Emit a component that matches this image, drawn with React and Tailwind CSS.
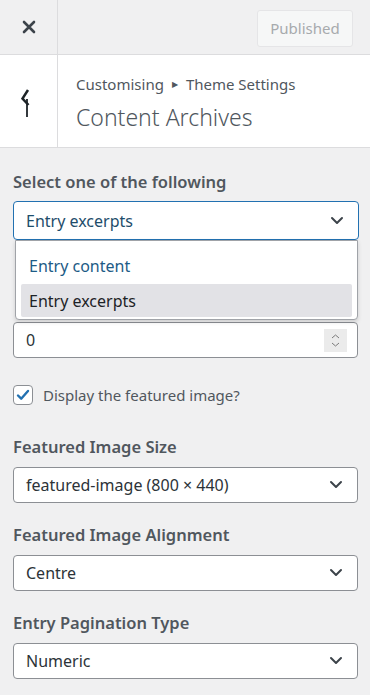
import React from 'react';

const font = { fontFamily: '"Noto Sans", "Open Sans", sans-serif' };

const Chevron = () => (
    <svg width="14" height="9" viewBox="0 0 14 9" fill="none">
        <path d="M2 2l5 5 5-5" stroke="#3c434a" strokeWidth="2" strokeLinecap="round" strokeLinejoin="round" />
    </svg>
);

const Label = ({ children }) => (
    <div className="text-[16.5px] font-semibold text-[#50575e] leading-[22px]">{children}</div>
);

const Field = ({ label, value }) => (
    <div className="mt-[21px]">
        <Label>{label}</Label>
        <div className="mt-[9px] h-[36px] w-[345px] bg-white border border-[#8c8f94] rounded-[4px] flex items-center justify-between pl-[12px] pr-[14px]">
            <span className="text-[16px] text-[#2c3338]">{value}</span>
            <Chevron />
        </div>
    </div>
);

export default function App() {
    return (
        <div style={font} className="w-[370px] h-[695px] bg-[#f0f0f1] overflow-hidden">
            {/* top bar */}
            <div className="h-[55px] flex border-b border-[#dcdcde]">
                <div className="w-[58px] border-r border-[#dcdcde] flex items-center justify-center">
                    <svg width="14" height="14" viewBox="0 0 14 14">
                        <path d="M2 2l10 10M12 2L2 12" stroke="#3c434a" strokeWidth="2.6" strokeLinecap="round" />
                    </svg>
                </div>
                <div className="flex-1 flex items-start justify-end pr-[17px] pt-[10px]">
                    <div className="h-[37px] w-[96px] rounded-[3px] border border-[#e5e5e7] bg-[#f6f7f7] flex items-center justify-center text-[15px] text-[#a7aaad]">
                        Published
                    </div>
                </div>
            </div>

            {/* section header */}
            <div className="h-[93px] bg-white flex border-b border-[#dcdcde]">
                <div className="w-[58px] border-r border-[#dcdcde] relative">
                    <svg className="absolute left-[18px] top-[31px]" width="14" height="34" viewBox="0 0 14 34">
                        <path d="M10 4L4.5 12.5 10.5 19" stroke="#1d2327" strokeWidth="2.5" fill="none" strokeLinejoin="miter" />
                        <path d="M9 13v18" stroke="#1d2327" strokeWidth="1.8" />
                    </svg>
                </div>
                <div className="pl-[18px] pt-[18px]">
                    <div className="text-[15px] text-[#50575e] leading-[22px] flex items-center">
                        Customising
                        <span className="text-[8px] mx-[8px] text-[#50575e]">▶</span>
                        Theme Settings
                    </div>
                    <div className="text-[23px] font-light text-[#50575e] leading-[32px] mt-[6px]">Content Archives</div>
                </div>
            </div>

            {/* controls */}
            <div className="px-[13px] pt-[23px]">
                <Label>Select one of the following</Label>
                <div className="relative">
                    <div className="mt-[8px] h-[39px] w-[346px] bg-white border border-[#2271b1] rounded-[4px] flex items-center justify-between pl-[12px] pr-[14px]">
                        <span className="text-[16px] text-[#1e4d6b]">Entry excerpts</span>
                        <Chevron />
                    </div>
                    <div className="absolute left-[2px] top-[39px] w-[343px] h-[80px] bg-white border border-[#a0a3a8] rounded-b-[4px] shadow-[0_2px_4px_rgba(0,0,0,0.15)] z-10 px-[5px] pt-[10px]">
                        <div className="h-[30px] pl-[8px] flex items-center text-[16px] text-[#1d5b86]">Entry content</div>
                        <div className="mt-[3px] h-[33px] pl-[8px] rounded-[2px] bg-[#e2e2e6] flex items-center text-[16px] text-[#1d2327]">Entry excerpts</div>
                    </div>
                    <div className="mt-[82px] h-[36px] w-[345px] bg-white border border-[#8c8f94] rounded-[4px] flex items-center justify-between pl-[12px] pr-[10px]">
                        <span className="text-[16px] text-[#2c3338]">0</span>
                        <div className="w-[23px] h-[23px] bg-[#ebebeb] flex flex-col items-center justify-center gap-[3px]">
                            <svg width="9" height="5" viewBox="0 0 9 5"><path d="M1 4l3.5-3 3.5 3" stroke="#7a7a7a" fill="none" strokeWidth="1" /></svg>
                            <svg width="9" height="5" viewBox="0 0 9 5"><path d="M1 1l3.5 3 3.5-3" stroke="#7a7a7a" fill="none" strokeWidth="1" /></svg>
                        </div>
                    </div>
                </div>

                <div className="mt-[26px] flex items-center">
                    <div className="w-[20px] h-[20px] bg-white border border-[#8c8f94] rounded-[4px] flex items-center justify-center">
                        <svg width="14" height="12" viewBox="0 0 14 12">
                            <path d="M2 6.5l3.2 3.2L12 2" stroke="#2271b1" strokeWidth="2.4" fill="none" strokeLinecap="round" strokeLinejoin="round" />
                        </svg>
                    </div>
                    <span className="ml-[10px] text-[15px] text-[#50575e]">Display the featured image?</span>
                </div>

                <div className="pt-[8px]">
                    <Field label="Featured Image Size" value="featured-image (800 × 440)" />
                    <Field label="Featured Image Alignment" value="Centre" />
                    <Field label="Entry Pagination Type" value="Numeric" />
                </div>
            </div>
        </div>
    );
}
